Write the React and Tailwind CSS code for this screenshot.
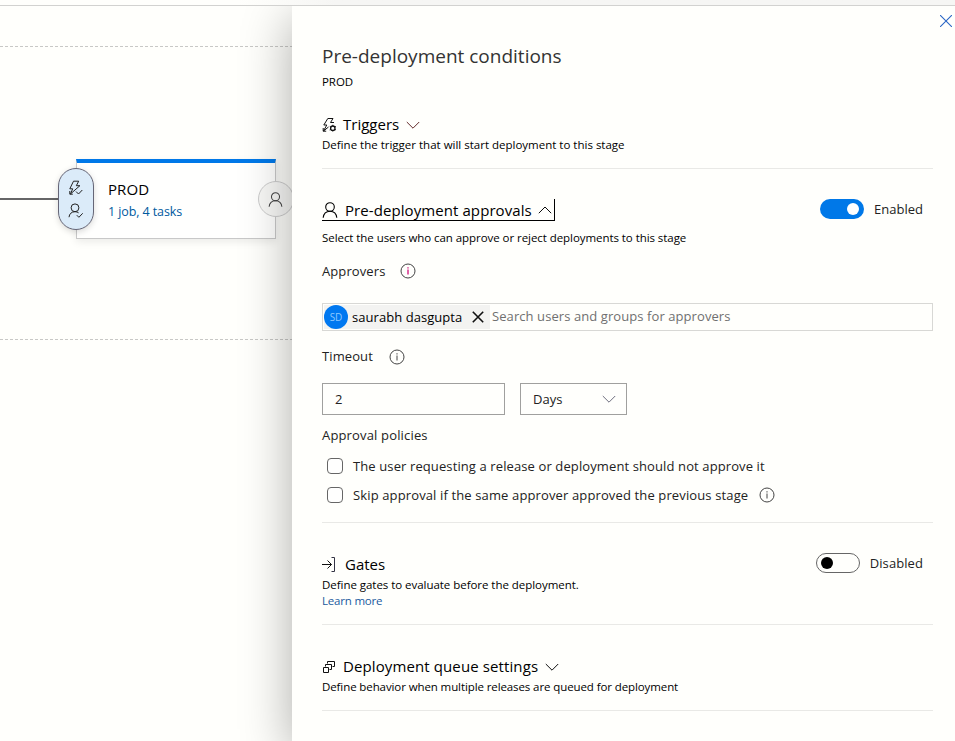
import React from "react";

function Chevron({ up = false, className = "" }) {
  return (
    <svg width="14" height="14" viewBox="0 0 14 14" fill="none" stroke="currentColor" strokeWidth="0.95" className={className}>
      <path d={up ? "M0.8 10.2 7 4l6.2 6.2" : "M0.8 4 7 10.2 13.2 4"} />
    </svg>
  );
}

function Person({ size = 16, className = "" }) {
  return (
    <svg width={size} height={size} viewBox="0 0 16 16" fill="none" stroke="currentColor" strokeWidth="1.1" className={className}>
      <circle cx="8" cy="5" r="4.3" />
      <path d="M1.2 15.8C1.6 11.8 4.2 9.3 8 9.3s6.400 2.500 6.800 6.500" />
    </svg>
  );
}

function PersonCheck() {
  return (
    <svg width="16" height="16" viewBox="0 0 16 16" fill="none" stroke="#222" strokeWidth="1">
      <circle cx="7" cy="4.800" r="3.900" />
      <path d="M1 14.200C1.300 10.900 3.500 8.700 7 8.700c1.500 0 2.700.4 3.600 1.100M8.800 12.200l2.100 2.100 3.800-4" />
    </svg>
  );
}

function BoltCheck() {
  return (
    <svg width="16" height="16" viewBox="0 0 16 16" fill="none" stroke="#222" strokeWidth="1">
      <path d="M5.500 1.200h5.200L8.300 5.700h3.600L2.500 13.900l2.200-5.100H1.800zM1.800 11v3.200h3M8 11.500l2.500 2.500 3.800-4" />
    </svg>
  );
}

function BoltGear() {
  return (
    <svg width="15" height="16" viewBox="0 0 15 16" fill="none" stroke="#111" strokeWidth="1">
      <path d="M12 5.500H8.500L11 1.500H5.800L1.800 8h3L1.500 14l5-4M1.200 11v3.200h3" />
      <circle cx="10.800" cy="11.200" r="2.200" strokeWidth="1.300" />
      <path d="M10.800 7.800v1M10.800 13.600v1M7.800 9.500l1 .5M12.900 12.400l1 .5M13.900 9.500l-1 .5M8.700 12.400l-1 .5" />
    </svg>
  );
}

function Info({ accent = false }) {
  return (
    <svg width="16" height="16" viewBox="0 0 16 16" fill="none" stroke="#444">
      <circle cx="8" cy="8" r="7" />
      <path d="M8 6.500v5M8 4.200v1.300" stroke={accent ? "#d0107a" : "#444"} strokeWidth={accent ? 1.3 : 1} />
    </svg>
  );
}

function Check({ label, tracking, children }) {
  return (
    <div className="flex h-[29px] items-center pl-[5px]">
      <span className="size-4 shrink-0 rounded-[4px] border border-[#666] bg-[#fffffe]" />
      <span className={"ml-[10px] pt-[2px] text-[13px] text-[#222] " + tracking}>{label}</span>
      {children}
    </div>
  );
}

function Canvas() {
  return (
    <div className="relative w-[292px] shrink-0">
      <div className="absolute top-[40px] h-px w-full bg-[repeating-linear-gradient(90deg,#c8c8c6_0_3px,transparent_3px_5px)]" />
      <div className="absolute top-[333px] h-px w-full bg-[repeating-linear-gradient(90deg,#c8c8c6_0_3px,transparent_3px_5px)]" />
      <div className="absolute top-[192px] h-[2px] w-[60px] bg-[#666]" />
      <div className="absolute left-[76px] top-[153px] h-[80px] w-[200px] border border-t-4 border-[#c8c8c8] border-t-[#0078e8] bg-[#fffffe] pl-[31px] pt-[15px] shadow-[0_3px_8px_rgba(0,0,0,0.08)]">
        <div className="h-[22px] text-[15px] leading-[22px] tracking-[0.1px] text-black">PROD</div>
        <div className="h-[22px] pt-px text-[12.500px] leading-[22px] tracking-[-0.1px] text-[#005a9e]">1 job, 4 tasks</div>
      </div>
      <div className="absolute left-[58px] top-[162px] flex h-[62px] w-[36px] flex-col items-center justify-center gap-[7px] rounded-full border border-[#667] bg-[#dbebf9] shadow-[0_2px_6px_rgba(0,0,0,0.15)]">
        <BoltCheck />
        <PersonCheck />
      </div>
      <div className="absolute left-[258px] top-[175px] flex size-[36px] items-center justify-center rounded-full border border-[#ccc] bg-[#f8f8f6] text-[#444]">
        <Person size={15} className="-ml-px" />
      </div>
    </div>
  );
}

const rule = "border-b border-[#e9e9e6]";

export default function App() {
  return (
    <div className="flex h-[741px] w-[955px] flex-col overflow-hidden bg-[#fffffc] font-['Open_Sans','Noto_Sans',sans-serif] whitespace-nowrap text-black">
      <div className="h-[6px] shrink-0 border-b border-[#d2d2d0] bg-linear-to-r from-[#fffffc] from-25% to-[#f6f6f4] to-35%" />
      <main className="flex min-h-0 flex-1 overflow-hidden">
        <Canvas />
        <aside className="relative w-[663px] shrink-0 bg-[#fffffc] pl-[30px] pr-[22px] pt-[34px] shadow-[0_12px_48px_rgba(0,0,0,0.33)]">
          <button aria-label="Close" className="absolute right-[3px] top-[9px] text-[#2b66c5]">
            <svg width="12" height="12" viewBox="0 0 12 12" stroke="currentColor" strokeWidth="1.1">
              <path d="M0 0l12 12M12 0 0 12" />
            </svg>
          </button>

          <h1 className="h-[32px] text-[19px] leading-[32px] text-[#333]">Pre-deployment conditions</h1>
          <p className="h-[18px] text-[11.500px] leading-[19px] tracking-[-0.05px]">PROD</p>

          <section className={"h-[79px] pt-[23px] " + rule}>
            <div className="flex h-[23px] items-center">
              <BoltGear />
              <h2 className="ml-[6px] text-[15px]">Triggers</h2>
              <Chevron className="ml-[7px] text-[#5a1f1f]" />
            </div>
            <p className="h-[18px] text-[11.500px] leading-[18px]">Define the trigger that will start deployment to this stage</p>
          </section>

          <section className={"h-[354px] pt-[30px] " + rule}>
            <div className="flex items-start justify-between">
              <div className="flex h-[22px] w-[233px] items-center border-b border-r border-black">
                <Person />
                <h2 className="ml-[7px] pt-[2px] text-[15px] tracking-[0.08px]">Pre-deployment approvals</h2>
                <Chevron up className="ml-auto mr-[2px]" />
              </div>
              <div className="mr-[10px] flex h-5 items-center">
                <span className="flex h-5 w-[44px] items-center justify-end rounded-full bg-[#0078e8] pr-[5px]">
                  <span className="size-3 rounded-full bg-white" />
                </span>
                <span className="ml-[10px] pt-[2px] text-[13px] text-[#222]">Enabled</span>
              </div>
            </div>
            <p className="mt-[8px] h-[18px] text-[11.500px] leading-[18px] tracking-[-0.06px]">Select the users who can approve or reject deployments to this stage</p>
            <div className="mt-[14px] flex h-[20px] items-center">
              <span className="pt-[2px] text-[13px] tracking-[0.1px] text-[#222]">Approvers</span>
              <span className="ml-[15px]"><Info accent /></span>
            </div>
            <div className="mt-[22px] flex h-[28px] items-center border border-[#d8d8d5] pl-px">
              <div className="flex h-6 w-[166px] items-center bg-[#f3f3f1]">
                <span className="flex size-6 items-center justify-center rounded-full bg-[#0078f0] text-[10px] text-[#8fc8ff]">SD</span>
                <span className="ml-[4px] pt-[2px] text-[13px] tracking-[0.05px]">saurabh dasgupta</span>
                <svg width="12" height="12" viewBox="0 0 12 12" stroke="#111" strokeWidth="1.6" className="ml-auto mr-[6px]">
                  <path d="M.8.8l10.400 10.400M11.200.8.8 11.200" />
                </svg>
              </div>
              <span className="ml-[2px] text-[13px] tracking-[0.08px] text-[#707070]">Search users and groups for approvers</span>
            </div>
            <div className="mt-[15px] flex h-[20px] items-center">
              <span className="pt-[2px] text-[13px] tracking-[0.1px] text-[#222]">Timeout</span>
              <span className="ml-[16px] pt-px"><Info /></span>
            </div>
            <div className="mt-[17px] flex h-[32px] gap-[15px]">
              <div className="flex w-[183px] items-center border border-[#a0a09e] pl-[12px] pt-[2px] text-[13px] text-[#222]">2</div>
              <div className="flex w-[107px] items-center justify-between border border-[#a0a09e] pl-[12px] pr-[10px] text-[13px] text-[#222]">
                <span className="pt-[2px]">Days</span>
                <Chevron className="text-[#667]" />
              </div>
            </div>
            <div className="mt-[10px] h-[21px] text-[13px] leading-[20px] tracking-[0.16px] text-[#222]">Approval policies</div>
            <div className="mt-[5px]">
              <Check label="The user requesting a release or deployment should not approve it" tracking="tracking-[0.11px]" />
              <Check label="Skip approval if the same approver approved the previous stage" tracking="tracking-[0.13px]">
                <span className="ml-[11px]"><Info /></span>
              </Check>
            </div>
          </section>

          <section className={"h-[102px] pt-[30px] " + rule}>
            <div className="flex h-[24px] items-start justify-between">
              <div className="flex h-[23px] items-center">
                <svg width="14" height="16" viewBox="0 0 14 16" fill="none" stroke="#111" strokeWidth="1">
                  <path d="M0 7.500h9.500M5.500 3.500l4 4-4 4" />
                  <path d="M9.500.5h3v14h-3" stroke="#334" />
                </svg>
                <h2 className="ml-[9px] text-[15px]">Gates</h2>
              </div>
              <div className="mr-[10px] flex h-5 items-center">
                <span className="flex h-5 w-[44px] items-center rounded-full border border-[#666] pl-[4px]">
                  <span className="size-3 rounded-full bg-black" />
                </span>
                <span className="ml-[10px] pt-[2px] text-[13px] tracking-[0.08px] text-[#222]">Disabled</span>
              </div>
            </div>
            <p className="h-[16px] text-[11.500px] leading-[16px] tracking-[-0.04px]">Define gates to evaluate before the deployment.</p>
            <p className="h-[16px] text-[11.500px] leading-[16px] tracking-[-0.2px] text-[#1a5a9e]">Learn more</p>
          </section>

          <section className={"h-[86px] pt-[30px] " + rule}>
            <div className="flex h-[23px] items-center">
              <svg width="14" height="14" viewBox="0 0 14 14" fill="none" stroke="#111">
                <path d="M5.500 1.500h7v5h-2M5.500 1.500v2M3.500 4.500h6v5h-2M3.500 4.500v2M1.500 7.500h5v5h-5z" />
              </svg>
              <h2 className="ml-[7px] text-[15px] tracking-[0.11px]">Deployment queue settings</h2>
              <Chevron className="ml-[7px]" />
            </div>
            <p className="h-[18px] text-[11.500px] leading-[18px] tracking-[-0.1px]">Define behavior when multiple releases are queued for deployment</p>
          </section>
        </aside>
      </main>
    </div>
  );
}
